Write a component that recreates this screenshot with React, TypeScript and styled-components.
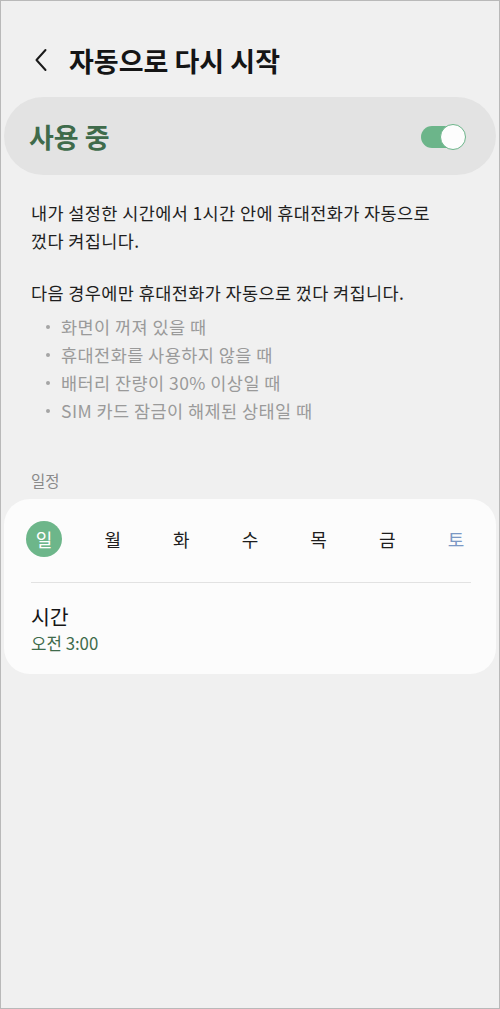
import React from "react";
import styled, { createGlobalStyle } from "styled-components";

const Global = createGlobalStyle`
  html, body { margin: 0; padding: 0; background: #f0f0f0; }
  body { font-family: "Noto Sans CJK KR", "Noto Sans", sans-serif; }
  * { box-sizing: border-box; }
`;

const Frame = styled.div`
  width: 500px;
  height: 1009px;
  border: 1px solid #b9b9b9;
  background: #f0f0f0;
  display: flex;
  flex-direction: column;
  overflow: hidden;
`;

const Header = styled.header`
  height: 96px;
  display: flex;
  align-items: center;
  gap: 18px;
  padding: 22px 0 0 30px;
`;

const BackButton = styled.button`
  border: 0;
  background: none;
  padding: 0;
  width: 20px;
  height: 26px;
  display: flex;
  align-items: center;
  justify-content: center;
  color: #1a1a1a;
`;

const Title = styled.h1`
  margin: 0;
  font-size: 27px;
  font-weight: 700;
  color: #151515;
  letter-spacing: 0;
`;

const MasterCard = styled.div`
  margin: 0 3px;
  height: 78px;
  border-radius: 39px;
  background: #e3e3e3;
  display: flex;
  align-items: center;
  justify-content: space-between;
  padding: 0 30px 0 25px;
`;

const MasterLabel = styled.span`
  font-size: 27px;
  font-weight: 700;
  color: #3f6b4b;
`;

const Switch = styled.div`
  position: relative;
  width: 45px;
  height: 26px;
  margin-top: 2px;
`;

const Track = styled.div`
  position: absolute;
  left: 0;
  top: 2px;
  width: 40px;
  height: 22px;
  border-radius: 11px;
  background: #6cb58a;
`;

const Thumb = styled.div`
  position: absolute;
  right: 0;
  top: 0;
  width: 26px;
  height: 26px;
  border-radius: 50%;
  background: #fdfdfd;
  border: 1.5px solid #6cb58a;
`;

const Body = styled.section`
  padding: 24px 20px 0 30px;
`;

const Paragraph = styled.p<{ $gap?: number }>`
  margin: 0 0 ${(p) => p.$gap ?? 0}px 0;
  font-size: 17.5px;
  letter-spacing: 0.4px;
  line-height: 28px;
  color: #1e1e1e;
  white-space: nowrap;
`;

const BulletList = styled.ul`
  margin: 6px 0 0 0;
  padding: 0;
  list-style: none;
`;

const BulletItem = styled.li`
  display: flex;
  align-items: center;
  font-size: 17.5px;
  letter-spacing: 0.45px;
  line-height: 28px;
  color: #9a9a9a;
  padding-left: 15px;
  &::before {
    content: "";
    width: 4px;
    height: 4px;
    border-radius: 50%;
    background: #a5a5a5;
    margin-right: 11px;
  }
`;

const SectionLabel = styled.div`
  margin: 44px 0 0 30px;
  font-size: 15.5px;
  line-height: 22px;
  color: #8a8a8a;
`;

const ScheduleCard = styled.div`
  margin: 8px 3px 0 3px;
  background: #fcfcfc;
  border-radius: 26px;
  padding: 22px 25px 0 27px;
  height: 175px;
`;

const DayRow = styled.div`
  display: flex;
  justify-content: space-between;
  align-items: center;
  margin: 0 -3px 0 -5px;
`;

const Day = styled.div<{ $active?: boolean; $sat?: boolean }>`
  width: 36px;
  height: 36px;
  border-radius: 50%;
  display: flex;
  align-items: center;
  justify-content: center;
  font-size: 18px;
  font-weight: 400;
  background: ${(p) => (p.$active ? "#6db68a" : "transparent")};
  color: ${(p) => (p.$active ? "#ffffff" : p.$sat ? "#7b98c4" : "#1e1e1e")};
`;

const Divider = styled.div`
  height: 1px;
  background: #e2e2e2;
  margin: 25px 0 0 0;
`;

const TimeBlock = styled.div`
  padding: 19px 0 0 0;
`;

const TimeTitle = styled.div`
  font-size: 20.5px;
  line-height: 28px;
  color: #161616;
`;

const TimeValue = styled.div`
  font-size: 16.8px;
  line-height: 26px;
  color: #3f6b4b;
`;

const days = ["일", "월", "화", "수", "목", "금", "토"];

export default function App() {
  return (
    <>
      <Global />
      <Frame>
        <Header>
          <BackButton aria-label="뒤로">
            <svg width="14" height="24" viewBox="0 0 14 24" fill="none">
              <path d="M11.5 2 L2.5 12 L11.5 22" stroke="#1a1a1a" strokeWidth="2" strokeLinecap="round" strokeLinejoin="round" />
            </svg>
          </BackButton>
          <Title>자동으로 다시 시작</Title>
        </Header>
        <MasterCard>
          <MasterLabel>사용 중</MasterLabel>
          <Switch>
            <Track />
            <Thumb />
          </Switch>
        </MasterCard>
        <Body>
          <Paragraph $gap={24}>
            내가 설정한 시간에서 1시간 안에 휴대전화가 자동으로
            <br />
            껐다 켜집니다.
          </Paragraph>
          <Paragraph>다음 경우에만 휴대전화가 자동으로 껐다 켜집니다.</Paragraph>
          <BulletList>
            <BulletItem>화면이 꺼져 있을 때</BulletItem>
            <BulletItem>휴대전화를 사용하지 않을 때</BulletItem>
            <BulletItem>배터리 잔량이 30% 이상일 때</BulletItem>
            <BulletItem>SIM 카드 잠금이 해제된 상태일 때</BulletItem>
          </BulletList>
        </Body>
        <SectionLabel>일정</SectionLabel>
        <ScheduleCard>
          <DayRow>
            {days.map((d, i) => (
              <Day key={d} $active={i === 0} $sat={i === 6}>
                {d}
              </Day>
            ))}
          </DayRow>
          <Divider />
          <TimeBlock>
            <TimeTitle>시간</TimeTitle>
            <TimeValue>오전 3:00</TimeValue>
          </TimeBlock>
        </ScheduleCard>
      </Frame>
    </>
  );
}
